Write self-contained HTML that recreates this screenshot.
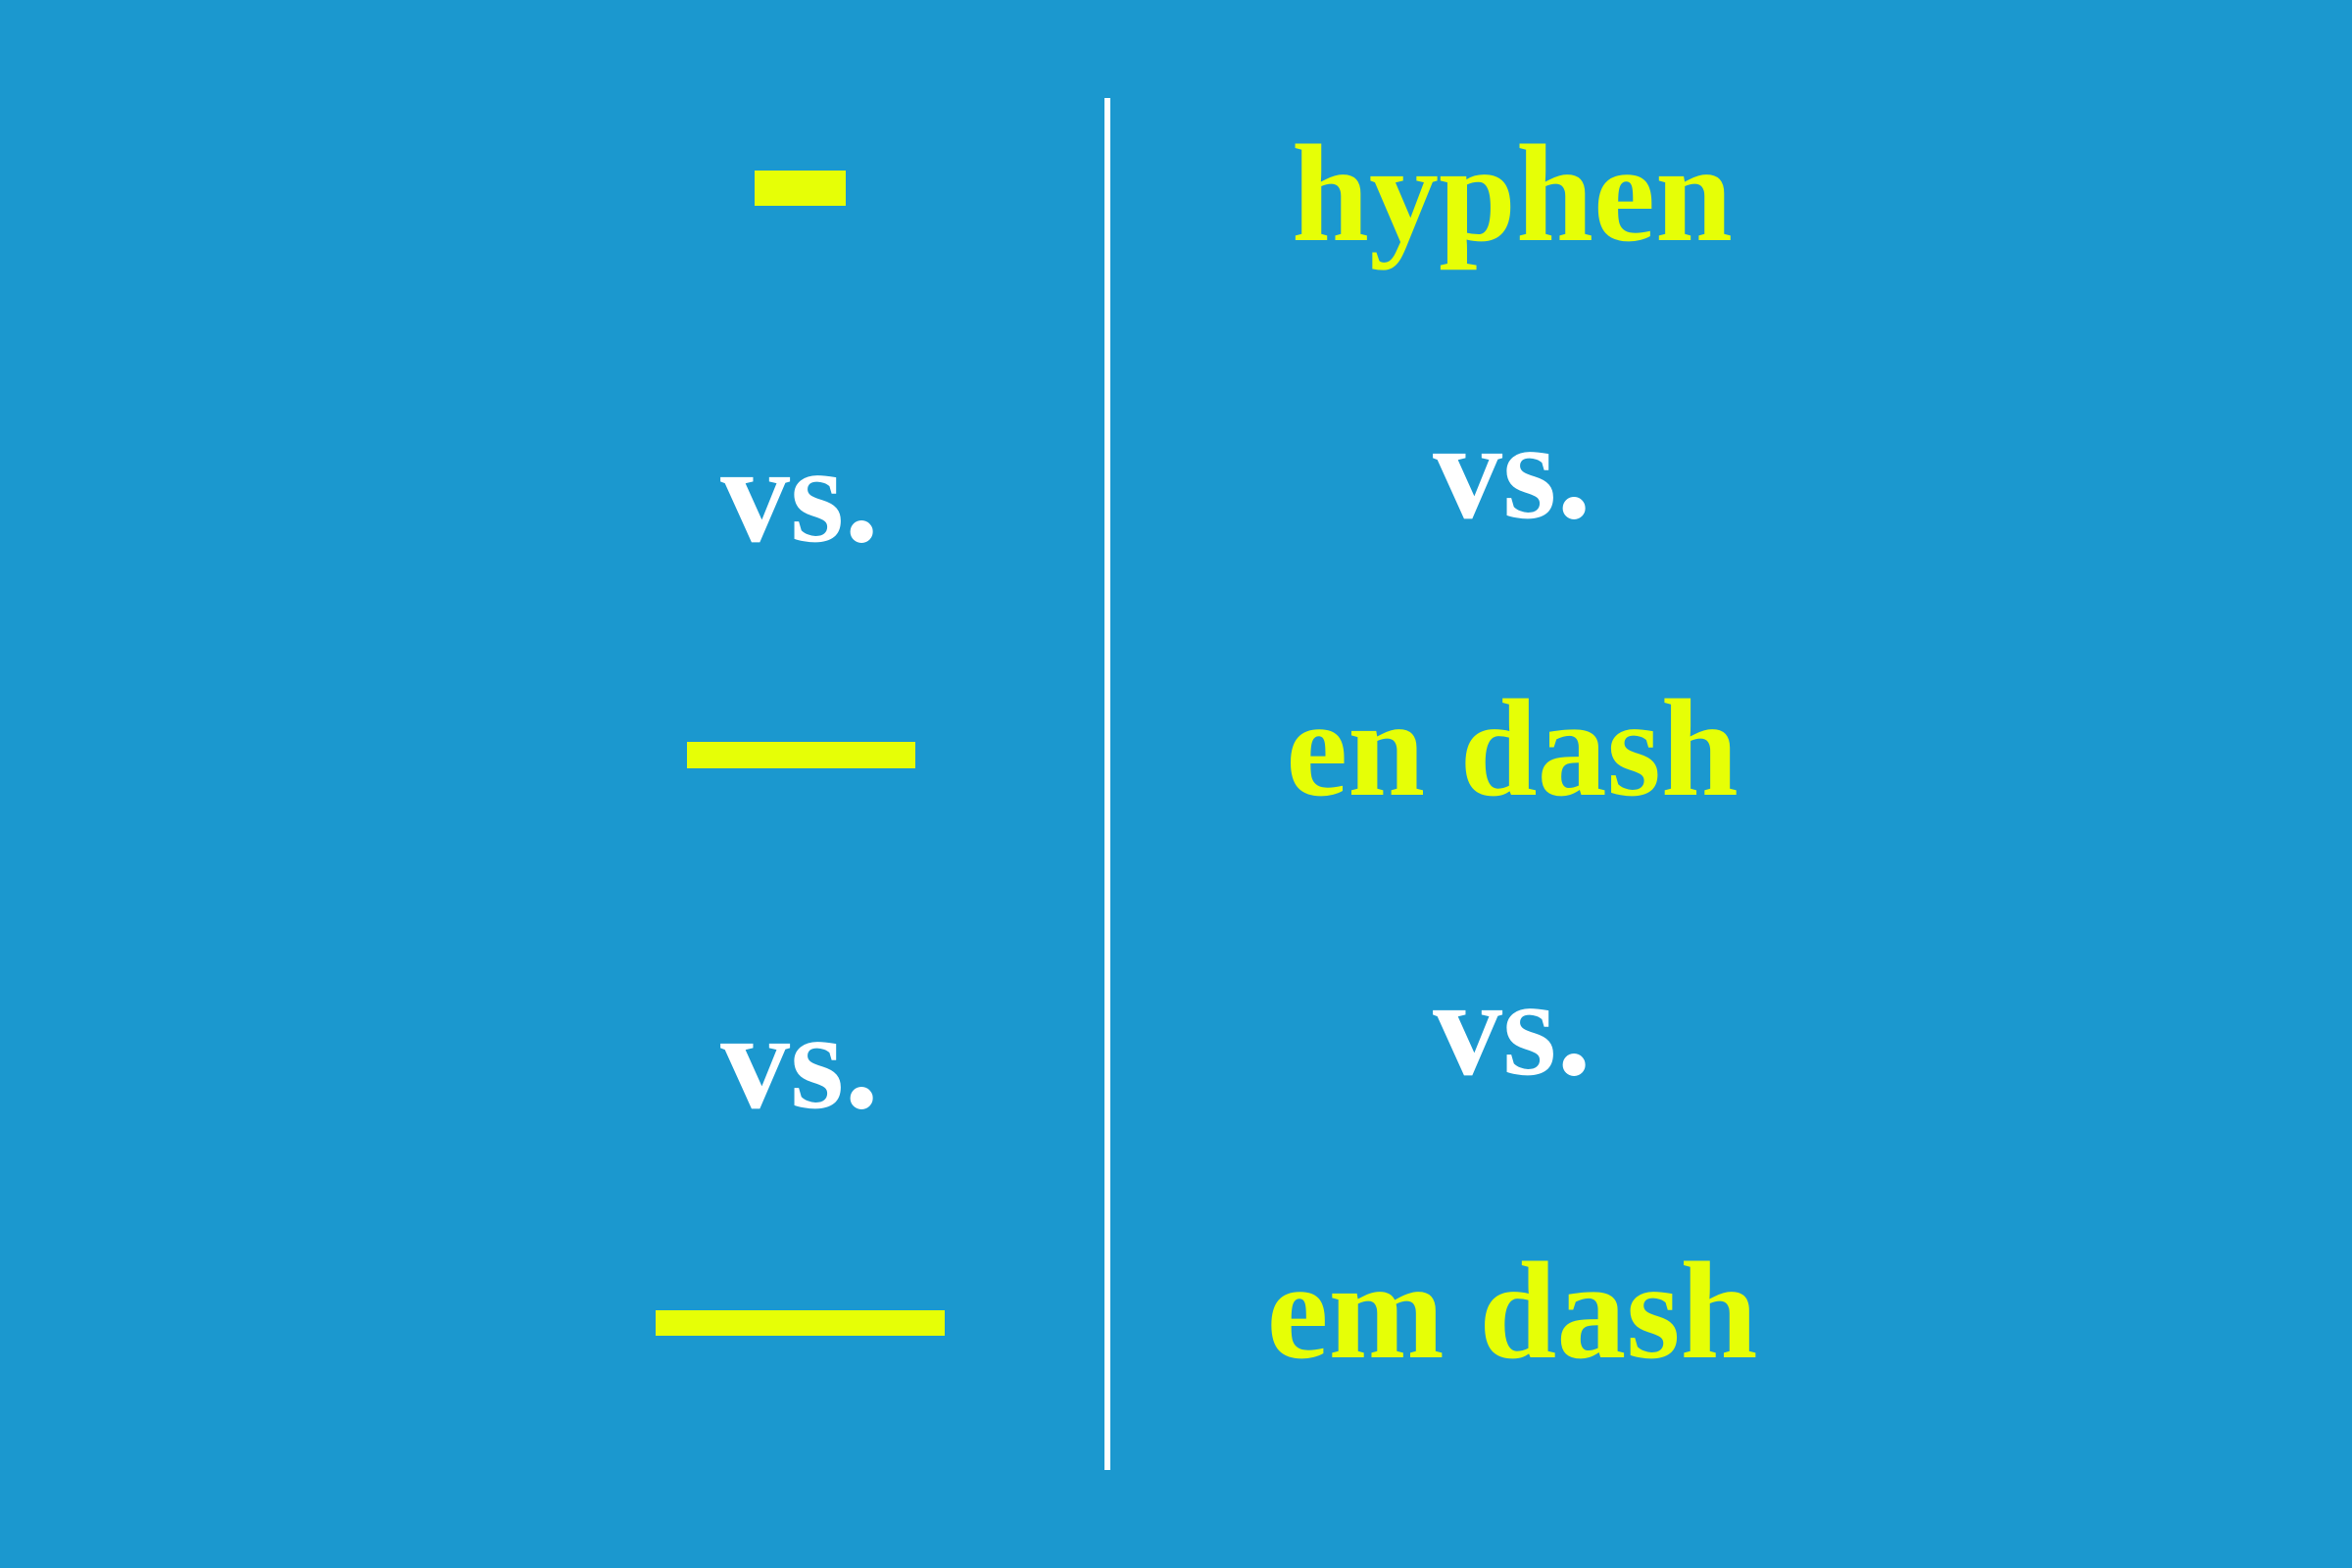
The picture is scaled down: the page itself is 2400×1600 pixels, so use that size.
<!DOCTYPE html>
<html><head><meta charset="utf-8"><style>
html,body{margin:0;padding:0}
body{width:2400px;height:1600px;background:#1b98cf;position:relative;overflow:hidden;font-family:"Liberation Serif",serif;font-weight:bold}
.b{position:absolute;background:#e6ff06}
.t{position:absolute;line-height:1em;white-space:nowrap;text-align:center;width:800px}
.y{color:#e6ff06;font-size:142px}
.w{color:#fff;font-size:142px}
</style></head><body>
<div style="position:absolute;left:1127px;top:100px;width:6px;height:1400px;background:#fff"></div>
<div class="b" style="left:770px;top:174px;width:93px;height:36px"></div>
<div class="b" style="left:701px;top:757px;width:233px;height:27px"></div>
<div class="b" style="left:669px;top:1337px;width:295px;height:26px"></div>
<div class="t w" style="left:416px;top:433px">vs.</div>
<div class="t w" style="left:416px;top:1011px">vs.</div>
<div class="t w" style="left:1143px;top:409px">vs.</div>
<div class="t w" style="left:1143px;top:977px">vs.</div>
<div class="t y" style="left:1143px;top:126px">hyphen</div>
<div class="t y" style="left:1143px;top:692px">en dash</div>
<div class="t y" style="left:1143px;top:1266px">em dash</div>
</body></html>
